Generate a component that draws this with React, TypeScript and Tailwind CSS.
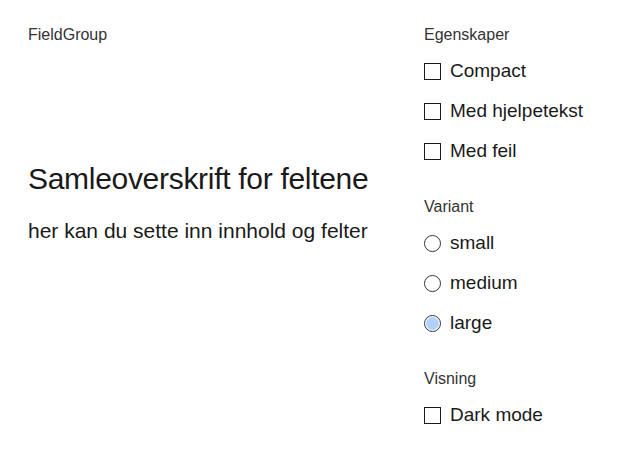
import React from "react";

const font = { fontFamily: '"Liberation Sans", Arial, sans-serif' };

function Checkbox({ label }: { label: string }) {
  return (
    <label className="flex items-center h-[40px] gap-[9px]">
      <span className="w-[17px] h-[17px] border border-[#1a1a1a] bg-white" />
      <span className="text-[19px] text-[#1a1a1a]">{label}</span>
    </label>
  );
}

function Radio({ label, checked }: { label: string; checked?: boolean }) {
  return (
    <label className="flex items-center h-[40px] gap-[9px]">
      <span className="w-[17px] h-[17px] rounded-full border border-[#333] bg-white flex items-center justify-center">
        {checked && <span className="w-[13px] h-[13px] rounded-full bg-[#b3d2fb]" />}
      </span>
      <span className="text-[19px] text-[#1a1a1a]">{label}</span>
    </label>
  );
}

export default function App() {
  return (
    <div className="w-[640px] h-[472px] bg-white flex" style={font}>
      <div className="flex-1 pl-[28px] pt-[25px] flex flex-col">
        <div className="text-[16px] text-[#333] leading-[20px]">FieldGroup</div>
        <div className="mt-[116px] text-[30px] text-[#1a1a1a] leading-[36px] tracking-[-0.3px]">Samleoverskrift for feltene</div>
        <div className="mt-[20px] text-[21px] text-[#1a1a1a] leading-[28px]">her kan du sette inn innhold og felter</div>
      </div>
      <div className="w-[216px] pt-[25px] flex flex-col">
        <div className="text-[16px] text-[#333] leading-[20px]">Egenskaper</div>
        <div className="mt-[6px] flex flex-col">
          <Checkbox label="Compact" />
          <Checkbox label="Med hjelpetekst" />
          <Checkbox label="Med feil" />
        </div>
        <div className="mt-[26px] text-[16px] text-[#333] leading-[20px]">Variant</div>
        <div className="mt-[6px] flex flex-col">
          <Radio label="small" />
          <Radio label="medium" />
          <Radio label="large" checked />
        </div>
        <div className="mt-[26px] text-[16px] text-[#333] leading-[20px]">Visning</div>
        <div className="mt-[6px] flex flex-col">
          <Checkbox label="Dark mode" />
        </div>
      </div>
    </div>
  );
}
